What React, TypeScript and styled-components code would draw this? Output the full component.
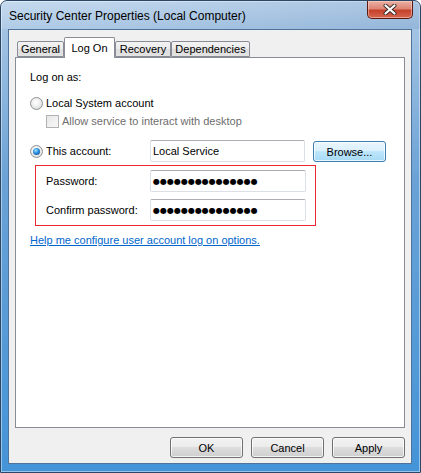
import React from "react";
import styled, { createGlobalStyle } from "styled-components";

const GlobalStyle = createGlobalStyle`
  html, body { margin: 0; padding: 0; background: #ffffff; }
  body { font-family: "Liberation Sans", Arial, sans-serif; }
  * { box-sizing: border-box; }
`;

const Window = styled.div`
  width: 421px;
  height: 473px;
  display: flex;
  flex-direction: column;
  border: 1px solid #2a4866;
  border-radius: 7px 7px 0 0;
  background: linear-gradient(
    to bottom,
    #bcd4ec 0px,
    #a3c3e3 28px,
    #6aa2d6 180px,
    #4494d8 100%
  );
  box-shadow: inset 0 0 0 1px rgba(255, 255, 255, 0.45);
  overflow: hidden;
`;

const TitleBar = styled.div`
  height: 28px;
  flex: 0 0 28px;
  display: flex;
  align-items: center;
  padding-left: 8px;
  padding-right: 7px;
  background: linear-gradient(to right, rgba(255, 255, 255, 0.15), rgba(40, 90, 150, 0.12));
`;

const Title = styled.div`
  font-size: 12px;
  color: #000;
  flex: 1;
  padding-top: 1px;
`;

const CloseButton = styled.div`
  align-self: flex-start;
  width: 46px;
  height: 18px;
  border: 1px solid #5a1a12;
  border-top: none;
  border-radius: 0 0 5px 5px;
  background: linear-gradient(
    to bottom,
    #eab0a3 0%,
    #dd8574 45%,
    #c6412c 55%,
    #d5674f 100%
  );
  box-shadow: inset 0 0 0 1px rgba(255, 220, 210, 0.5);
  display: flex;
  align-items: center;
  justify-content: center;
`;

const Client = styled.div`
  flex: 1;
  margin: 0 8px 8px 7px;
  border: 1px solid #4f7399;
  background: #f0f0f0;
  display: flex;
  flex-direction: column;
  padding: 7px 6px 5px 6px;
`;

const TabStrip = styled.div`
  height: 20px;
  flex: 0 0 20px;
  display: flex;
  align-items: flex-end;
  padding-left: 2px;
`;

const Tab = styled.div<{ $active?: boolean; $w: number }>`
  width: ${(p) => p.$w}px;
  height: ${(p) => (p.$active ? 21 : 16)}px;
  margin-bottom: ${(p) => (p.$active ? -1 : 0)}px;
  position: relative;
  z-index: ${(p) => (p.$active ? 2 : 1)};
  border: 1px solid #898c95;
  border-bottom: ${(p) => (p.$active ? "none" : "1px solid #898c95")};
  border-radius: 2px 2px 0 0;
  background: ${(p) =>
    p.$active
      ? "#ffffff"
      : "linear-gradient(to bottom, #f3f3f3 0%, #ebebeb 50%, #dedede 51%, #e3e3e3 100%)"};
  font-size: 11px;
  color: #000;
  display: flex;
  align-items: center;
  justify-content: center;
  padding-bottom: ${(p) => (p.$active ? 1 : 0)}px;
`;

const Panel = styled.div`
  flex: 1;
  border: 1px solid #898c95;
  background: #ffffff;
  display: flex;
  flex-direction: column;
  padding: 13px 14px 0 14px;
  font-size: 11px;
  color: #000;
`;

const SectionLabel = styled.div`
  line-height: 13px;
`;

const OptionRow = styled.div<{ $mt: number; $indent?: number }>`
  display: flex;
  align-items: center;
  margin-top: ${(p) => p.$mt}px;
  margin-left: ${(p) => p.$indent ?? 0}px;
  line-height: 13px;
  height: 13px;
`;

const Radio = styled.span<{ $checked?: boolean }>`
  width: 13px;
  height: 13px;
  flex: 0 0 13px;
  border-radius: 50%;
  border: 1px solid #8f9296;
  background: radial-gradient(circle at 45% 40%, #ffffff 0%, #f1f1f1 40%, #cfd0d2 100%);
  display: flex;
  align-items: center;
  justify-content: center;
  margin-right: 3px;

  &::after {
    content: "";
    display: ${(p) => (p.$checked ? "block" : "none")};
    width: 7px;
    height: 7px;
    border-radius: 50%;
    background: radial-gradient(circle at 40% 35%, #9fe3ff 0%, #2a8fdd 45%, #0b3a78 100%);
  }
`;

const CheckBox = styled.span`
  width: 13px;
  height: 13px;
  flex: 0 0 13px;
  border: 1px solid #b1b1b1;
  background: linear-gradient(to bottom right, #e8e8e8, #f8f8f8);
  margin-right: 3px;
`;

const Disabled = styled.span`
  color: #6d6d6d;
`;

const AccountRow = styled.div`
  display: flex;
  align-items: center;
  margin-top: 12px;
  height: 22px;
`;

const AccountLabel = styled.div`
  width: 120px;
  flex: 0 0 120px;
  display: flex;
  align-items: center;
  line-height: 13px;
`;

const TextBox = styled.div<{ $w: number }>`
  width: ${(p) => p.$w}px;
  height: 22px;
  border: 1px solid #dbdfe6;
  border-top-color: #abadb3;
  border-radius: 2px;
  background: #ffffff;
  padding: 0 2px;
  display: flex;
  align-items: center;
  font-size: 11px;
  color: #000;
  white-space: nowrap;
  overflow: hidden;
`;

const Dots = styled.span`
  font-family: "DejaVu Sans", sans-serif;
  font-size: 8px;
  letter-spacing: 0px;
  padding-top: 1px;
`;

const Button = styled.div<{ $hot?: boolean }>`
  width: 73px;
  height: 21px;
  border: 1px solid ${(p) => (p.$hot ? "#3c7fb1" : "#707070")};
  border-radius: 3px;
  background: ${(p) =>
    p.$hot
      ? "linear-gradient(to bottom, #eaf6fd 0%, #d9f0fc 49%, #bee6fd 50%, #a7d9f5 100%)"
      : "linear-gradient(to bottom, #f2f2f2 0%, #ebebeb 49%, #dddddd 50%, #cfcfcf 100%)"};
  box-shadow: inset 0 0 0 1px rgba(255, 255, 255, 0.75);
  font-size: 11px;
  color: #000;
  display: flex;
  align-items: center;
  justify-content: center;
`;

const BrowseButton = styled(Button)`
  margin-left: 8px;
  align-self: flex-end;
`;

const RedFrame = styled.div`
  margin-top: 3px;
  margin-left: 5px;
  width: 281px;
  border-width: 1px;
  border-style: solid;
  border-color: rgb(235, 40, 45);
  padding: 4px 9px 4px 10px;
  display: flex;
  flex-direction: column;
  gap: 7px;
`;

const FieldRow = styled.div`
  display: flex;
  align-items: center;
`;

const FieldLabel = styled.div`
  width: 104px;
  flex: 0 0 104px;
  line-height: 13px;
`;

const HelpLink = styled.a`
  margin-top: 8px;
  color: #0066cc;
  text-decoration: underline;
  line-height: 13px;
  align-self: flex-start;
  cursor: pointer;
`;

const ButtonBar = styled.div`
  display: flex;
  justify-content: flex-end;
  gap: 8px;
  margin-top: 9px;
  height: 21px;
`;

const tabs = [
  { label: "General", w: 47 },
  { label: "Log On", w: 51, active: true },
  { label: "Recovery", w: 56 },
  { label: "Dependencies", w: 79 },
];

const PASSWORD = "\u25CF".repeat(15);

export default function App() {
  return (
    <>
      <GlobalStyle />
      <Window>
        <TitleBar>
          <Title>Security Center Properties (Local Computer)</Title>
          <CloseButton>
            <svg width="14" height="11" viewBox="0 0 14 11">
              <path d="M2.5 1.5 L11.5 9.5 M11.5 1.5 L2.5 9.5" stroke="#3a2a28" strokeWidth="4" strokeLinecap="round" />
              <path d="M2.5 1.5 L11.5 9.5 M11.5 1.5 L2.5 9.5" stroke="#ffffff" strokeWidth="2.2" strokeLinecap="round" />
            </svg>
          </CloseButton>
        </TitleBar>
        <Client>
          <TabStrip>
            {tabs.map((t) => (
              <Tab key={t.label} $w={t.w} $active={t.active}>
                {t.label}
              </Tab>
            ))}
          </TabStrip>
          <Panel>
            <SectionLabel>Log on as:</SectionLabel>
            <OptionRow $mt={13}>
              <Radio />
              Local System account
            </OptionRow>
            <OptionRow $mt={5} $indent={16}>
              <CheckBox />
              <Disabled>Allow service to interact with desktop</Disabled>
            </OptionRow>
            <AccountRow>
              <AccountLabel>
                <Radio $checked />
                This account:
              </AccountLabel>
              <TextBox $w={155}>Local Service</TextBox>
              <BrowseButton $hot>Browse...</BrowseButton>
            </AccountRow>
            <RedFrame>
              <FieldRow>
                <FieldLabel>Password:</FieldLabel>
                <TextBox $w={156}>
                  <Dots>{PASSWORD}</Dots>
                </TextBox>
              </FieldRow>
              <FieldRow>
                <FieldLabel>Confirm password:</FieldLabel>
                <TextBox $w={156}>
                  <Dots>{PASSWORD}</Dots>
                </TextBox>
              </FieldRow>
            </RedFrame>
            <HelpLink>Help me configure user account log on options.</HelpLink>
          </Panel>
          <ButtonBar>
            <Button>OK</Button>
            <Button>Cancel</Button>
            <Button>Apply</Button>
          </ButtonBar>
        </Client>
      </Window>
    </>
  );
}
